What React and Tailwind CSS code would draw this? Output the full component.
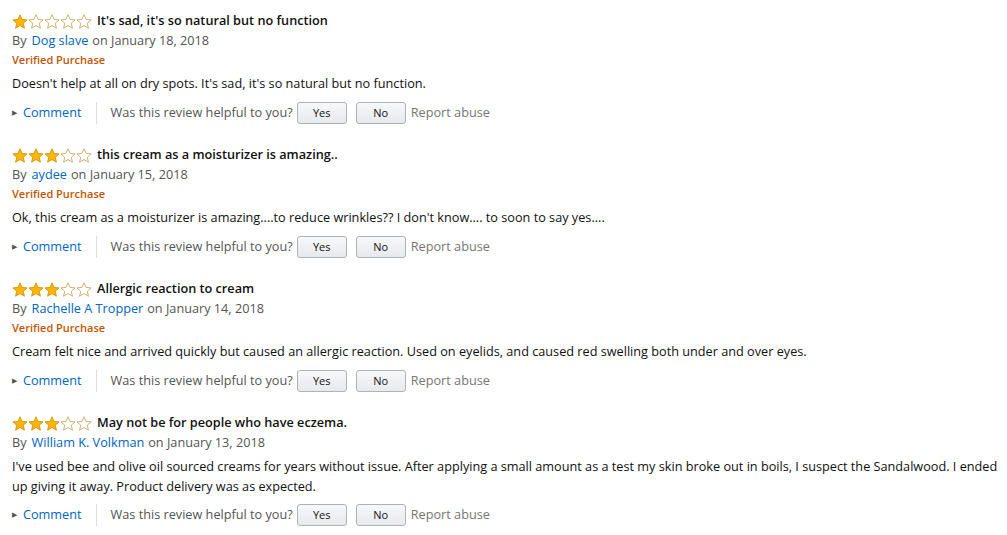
import { useState } from "react";

const reviews = [
  {
    stars: 1,
    title: "It's sad, it's so natural but no function",
    author: "Dog slave",
    date: "January 18, 2018",
    verified: true,
    body: ["Doesn't help at all on dry spots. It's sad, it's so natural but no function."],
  },
  {
    stars: 3,
    title: "this cream as a moisturizer is amazing..",
    author: "aydee",
    date: "January 15, 2018",
    verified: true,
    body: ["Ok, this cream as a moisturizer is amazing....to reduce wrinkles?? I don't know.... to soon to say yes...."],
  },
  {
    stars: 3,
    title: "Allergic reaction to cream",
    author: "Rachelle A Tropper",
    date: "January 14, 2018",
    verified: true,
    body: ["Cream felt nice and arrived quickly but caused an allergic reaction. Used on eyelids, and caused red swelling both under and over eyes."],
  },
  {
    stars: 3,
    title: "May not be for people who have eczema.",
    author: "William K. Volkman",
    date: "January 13, 2018",
    verified: false,
    body: [
      "I've used bee and olive oil sourced creams for years without issue. After applying a small amount as a test my skin broke out in boils, I suspect the Sandalwood. I ended",
      "up giving it away. Product delivery was as expected.",
    ],
  },
];

const Star = ({ filled }) => (
  <svg width="16" height="15" viewBox="0 0 16 15" className="block">
    <path
      d="M8 0.8 L10.1 5.4 L15.1 5.9 L11.3 9.2 L12.4 14.2 L8 11.6 L3.6 14.2 L4.7 9.2 L0.9 5.9 L5.9 5.4 Z"
      fill={filled ? "#f7b50e" : "#ffffff"}
      stroke={filled ? "#d7940a" : "#c9a765"}
      strokeWidth="0.9"
      strokeLinejoin="round"
    />
  </svg>
);

const Stars = ({ count }) => (
  <div className="flex items-center">
    {[1, 2, 3, 4, 5].map((i) => (
      <Star key={i} filled={i <= count} />
    ))}
  </div>
);

const Review = ({ review }) => {
  const [voted, setVoted] = useState(null);

  return (
    <div className="mb-[21px]">
      {/* Stars + title */}
      <div className="flex items-center h-[20px]">
        <Stars count={review.stars} />
        <span className="ml-[5px] text-[12.7px] font-semibold text-[#111]">{review.title}</span>
      </div>

      {/* Author */}
      <div className="h-[20px] flex items-center text-[12.7px] text-[#555] whitespace-nowrap">
        <span>By</span>
        <a href="#" className="ml-[5px] mr-[4px] text-[#0066c0]">{review.author}</a>
        <span>on {review.date}</span>
      </div>

      {review.verified && (
        <div className="h-[18px] flex items-center text-[11px] font-semibold text-[#c45500]">
          Verified Purchase
        </div>
      )}

      {/* Body */}
      <div className={`${review.verified ? "mt-[4px]" : "mt-[3px]"} text-[12.7px] text-[#111] leading-[20px]`}>
        {review.body.map((line, i) => (
          <div key={i} className="whitespace-nowrap">{line}</div>
        ))}
      </div>

      {/* Actions */}
      <div className={`${review.verified ? "mt-[9px]" : "mt-[8px]"} flex items-center h-[22px] text-[12.7px]`}>
        <span className="text-[#555] text-[7px] mr-[6px]">&#9654;</span>
        <a href="#" className="text-[#0066c0]">Comment</a>
        <span className="ml-[14px] mr-[14px] h-[22px] w-px bg-[#ddd]" />
        <span className="text-[#555]">Was this review helpful to you?</span>
        <button
          onClick={() => setVoted("yes")}
          className="ml-[4px] w-[50px] h-[22px] pb-[2px] rounded-[3px] border border-[#adb1b8] bg-gradient-to-b from-[#f7f8fa] to-[#e7e9ec] text-[11px] text-[#111] leading-none"
        >
          Yes
        </button>
        <button
          onClick={() => setVoted("no")}
          className="ml-[9px] w-[50px] h-[22px] pb-[2px] rounded-[3px] border border-[#adb1b8] bg-gradient-to-b from-[#f7f8fa] to-[#e7e9ec] text-[11px] text-[#111] leading-none"
        >
          No
        </button>
        <a href="#" className="ml-[5px] text-[#767676]">Report abuse</a>
      </div>
    </div>
  );
};

export default function App() {
  return (
    <div className="bg-white min-h-screen pl-[12px] pt-[11px] w-[1000px]" style={{ fontFamily: "'Open Sans', Arial, sans-serif" }}>
      {reviews.map((r, i) => (
        <Review key={i} review={r} />
      ))}
    </div>
  );
}
